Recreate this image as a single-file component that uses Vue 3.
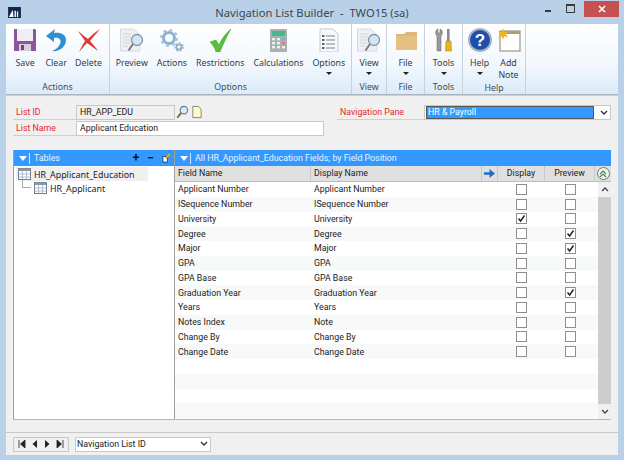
<template>
  <div class="window">
    <div class="titlebar">
      <svg class="logo" viewBox="0 0 14 12">
        <rect width="14" height="12" fill="#12294f" />
        <path d="M1 11 L5 3 L6 11 Z M7 4 H8.5 V11 H7 Z M9.6 5 H11 V11 H9.6 Z" fill="#fff" />
      </svg>
      <span class="title">Navigation List Builder &nbsp;-&nbsp; TWO15 (sa)</span>
      <div class="controls">
        <span class="min"></span>
        <span class="max"></span>
        <span class="close">
          <svg viewBox="0 0 8 8" width="8" height="8"><path d="M1 1 L7 7 M7 1 L1 7" stroke="#fff" stroke-width="1.6" /></svg>
        </span>
      </div>
    </div>

    <div class="ribbon">
      <div v-for="group in ribbon" :key="group.id" class="group" :class="group.id">
        <div class="group-items">
          <div v-for="btn in group.buttons" :key="btn.label" class="rbtn">
            <svg class="ricon" viewBox="0 0 24 24">
              <template v-if="btn.icon === 'save'">
                <path d="M1 1 H22 L23 2 V23 H1 Z" fill="#8c569f" />
                <rect x="4" y="1" width="16" height="12" fill="#f1edf4" />
                <rect x="6" y="16" width="12" height="7" fill="#d8cfdc" />
                <rect x="8" y="17" width="3" height="5" fill="#6d4380" />
              </template>
              <template v-else-if="btn.icon === 'undo'">
                <path d="M11 1 L2 8 L10 14 V10 C15 9 18 12 16 16 C14 20 11 22 8 23 C15 24 22 19 22 12 C22 6 16 4 10 5 Z" fill="#2f8fd3" />
              </template>
              <template v-else-if="btn.icon === 'x'">
                <path d="M2 3 C6 6 9 9 12 11 C15 8 19 4 24 1 C21 5 17 9 14 13 C17 16 20 20 22 23 C18 20 14 17 11 15 C8 18 6 21 3 24 C5 20 7 16 9 13 C7 10 4 6 2 3 Z" fill="#dd3a30" />
              </template>
              <template v-else-if="btn.icon === 'preview'">
                <path d="M0.5 1 H14 L20 7 V23 H0.5 Z" fill="#eef0f3" stroke="#c9ced5" stroke-width="0.7" />
                <path d="M3 6 H11 M3 9 H11 M3 12 H10 M3 15 H10 M3 18 H8" stroke="#cdd4db" stroke-width="1" />
                <circle cx="17" cy="12" r="5.5" fill="#cfe6f6" stroke="#86939d" stroke-width="1.3" />
                <path d="M13 16 L8.5 22.5" stroke="#77797c" stroke-width="2" />
              </template>
              <template v-else-if="btn.icon === 'gears'">
                <circle cx="9" cy="10" r="5.5" fill="none" stroke="#8db1d3" stroke-width="3" />
                <circle cx="9" cy="10" r="8" fill="none" stroke="#a4c2dd" stroke-width="2" stroke-dasharray="3 3.3" />
                <circle cx="19" cy="19" r="2.6" fill="none" stroke="#93a8ba" stroke-width="1.8" />
                <circle cx="19" cy="19" r="4.2" fill="none" stroke="#a9bac9" stroke-width="1.5" stroke-dasharray="2 1.8" />
              </template>
              <template v-else-if="btn.icon === 'check'">
                <path d="M2 14 L8 12 L11 17 C14 10 18 5 23 1 C19 8 15 16 12 24 H8 C7 20 5 17 2 14 Z" fill="#55c23c" stroke="#3a9a2a" stroke-width="0.5" />
              </template>
              <template v-else-if="btn.icon === 'calc'">
                <rect x="4" y="1" width="17" height="23" rx="1" fill="#a9b0ad" />
                <rect x="6" y="3" width="13" height="5" fill="#48b98a" />
                <g fill="#eef0ef">
                  <rect x="6" y="10" width="3" height="2.4" /><rect x="11" y="10" width="3" height="2.4" /><rect x="16" y="10" width="3" height="2.4" fill="#6fb3e0" />
                  <rect x="6" y="14" width="3" height="2.4" /><rect x="11" y="14" width="3" height="2.4" /><rect x="16" y="14" width="3" height="2.4" fill="#e77" />
                  <rect x="6" y="18" width="3" height="2.4" /><rect x="11" y="18" width="3" height="2.4" /><rect x="16" y="18" width="3" height="2.4" />
                </g>
              </template>
              <template v-else-if="btn.icon === 'list'">
                <path d="M3 1 H16 L21 6 V24 H3 Z" fill="#f7f8f9" stroke="#b9bec4" stroke-width="0.8" />
                <path d="M9 8 H18 M9 12 H18 M9 16 H18 M9 20 H18" stroke="#7c8087" stroke-width="1" />
                <path d="M5 8 H7.5 M5 12 H7.5 M5 16 H7.5 M5 20 H7.5" stroke="#27324a" stroke-width="1.6" />
              </template>
              <template v-else-if="btn.icon === 'folder'">
                <path d="M2 6 V22 H23 V4 H12 L10 6 Z" fill="#dfb878" />
                <path d="M2 8 H23 V22 H2 Z" fill="#e5bf84" />
              </template>
              <template v-else-if="btn.icon === 'tools'">
                <path d="M6 1 C3 2 3 6 5 8 V23 H9 V8 C11 6 11 2 8 1 V5 H6 Z" fill="#9a9a96" stroke="#666" stroke-width="0.5" />
                <rect x="15" y="1" width="2.6" height="12" fill="#8b8b88" />
                <path d="M14 13 H19 L19.5 23 H13.5 Z" fill="#e8b321" stroke="#a87e10" stroke-width="0.5" />
              </template>
              <template v-else-if="btn.icon === 'help'">
                <circle cx="12" cy="12" r="12" fill="#a9b3bd" />
                <circle cx="12" cy="12" r="10" fill="#1e4fae" />
                <text x="12" y="18" text-anchor="middle" class="qmark">?</text>
              </template>
              <template v-else-if="btn.icon === 'note'">
                <rect x="3" y="3" width="20" height="20" fill="#fff" stroke="#a8a49a" stroke-width="1.4" />
                <rect x="3" y="3" width="20" height="3" fill="#b09a7a" />
                <path d="M6 0 L7.2 4 L11 3 L8.6 6 L11 9.5 L7.2 8.3 L6 12 L4.8 8.3 L1 9.5 L3.4 6 L1 3 L4.8 4 Z" fill="#f6b21c" />
              </template>
            </svg>
            <span class="rlabel">{{ btn.label }}</span>
            <span v-if="btn.drop" class="drop"></span>
          </div>
        </div>
        <div class="group-name">{{ group.name }}</div>
      </div>
      <div class="ribbon-rest"></div>
    </div>

    <div class="content">
      <div class="form">
        <div class="form-left">
          <div class="form-row">
            <label class="req">List ID</label>
            <div class="input short">HR_APP_EDU</div>
            <svg class="mini" viewBox="0 0 14 14">
              <circle cx="8.5" cy="5" r="4" fill="#d7ecf7" stroke="#5f7d90" stroke-width="1.2" />
              <path d="M5.5 8 L1.5 13" stroke="#7a6a3a" stroke-width="2" />
            </svg>
            <svg class="mini" viewBox="0 0 14 14">
              <path d="M3 1 H9 L12 4 V13 H3 Z" fill="#fff8c8" stroke="#666" stroke-width="0.8" />
            </svg>
          </div>
          <div class="form-row">
            <label class="req">List Name</label>
            <div class="input long">Applicant Education</div>
          </div>
        </div>
        <div class="form-right">
          <label class="req pane-label">Navigation Pane</label>
          <div class="pane-select">
            <span class="pane-value">HR &amp; Payroll</span>
            <svg class="chev" viewBox="0 0 8 6" width="8" height="6"><path d="M1 1 L4 4 L7 1" fill="none" stroke="#333" stroke-width="1.4" /></svg>
          </div>
        </div>
      </div>

      <div class="panes">
        <div class="left-pane">
          <div class="pane-head">
            <svg class="head-chev" viewBox="0 0 8 5" width="8" height="5"><path d="M0 0 H8 L4 5 Z" fill="#fff" /></svg>
            <span class="head-sep"></span>
            <span>Tables</span>
            <span class="head-tools">
              <b>+</b><b>&minus;</b>
              <svg viewBox="0 0 10 11" width="9" height="10">
                <rect x="1" y="4" width="5" height="6" fill="#fff" stroke="#222" stroke-width="0.8" />
                <path d="M4 6 L9 1" stroke="#e9a91f" stroke-width="2" />
              </svg>
            </span>
          </div>
          <div class="tree">
            <div class="tree-row selected-node">
              <svg class="tbl" viewBox="0 0 13 12">
                <rect x="0.5" y="0.5" width="12" height="11" fill="#fff" stroke="#6d7d8e" />
                <rect x="0.5" y="0.5" width="12" height="2.5" fill="#8a99a8" />
                <path d="M0.5 6 H12.5 M0.5 9 H12.5 M4.5 3 V11.5 M8.5 3 V11.5" stroke="#9fb0c0" stroke-width="0.8" />
              </svg>
              <span class="node-name">HR_Applicant_Education</span>
            </div>
            <div class="tree-row child">
              <span class="branch"></span>
              <svg class="tbl" viewBox="0 0 13 12">
                <rect x="0.5" y="0.5" width="12" height="11" fill="#fff" stroke="#6d7d8e" />
                <rect x="0.5" y="0.5" width="12" height="2.5" fill="#8a99a8" />
                <path d="M0.5 6 H12.5 M0.5 9 H12.5 M4.5 3 V11.5 M8.5 3 V11.5" stroke="#9fb0c0" stroke-width="0.8" />
              </svg>
              <span class="node-name">HR_Applicant</span>
            </div>
          </div>
        </div>

        <div class="right-pane">
          <div class="pane-head">
            <svg class="head-chev" viewBox="0 0 8 5" width="8" height="5"><path d="M0 0 H8 L4 5 Z" fill="#fff" /></svg>
            <span class="head-sep"></span>
            <span>All HR_Applicant_Education Fields; by Field Position</span>
          </div>
          <div class="col-head">
            <div class="cell">Field Name</div>
            <div class="cell">Display Name</div>
            <div class="cell arrow-cell">
              <svg viewBox="0 0 11 9" width="11" height="9"><path d="M0 3.2 H5.5 V0 L11 4.5 L5.5 9 V5.8 H0 Z" fill="#1f6fc0" /></svg>
            </div>
            <div class="cell center">Display</div>
            <div class="cell center">Preview</div>
            <div class="cell collapse-cell">
              <span class="collapse">
                <svg viewBox="0 0 8 8" width="8" height="8"><path d="M1 4 L4 1 L7 4 M1 7 L4 4 L7 7" fill="none" stroke="#4d7f4d" stroke-width="1.1" /></svg>
              </span>
            </div>
          </div>
          <div class="grid-body">
            <div class="rows">
              <div v-for="(row, i) in rows" :key="i" class="row" :class="{ alt: i % 2 === 1 }">
                <span class="txt">{{ row.field }}</span>
                <span class="txt">{{ row.display }}</span>
                <span></span>
                <span class="box-cell"><span v-if="row.field" class="box"><svg v-if="row.d" viewBox="0 0 9 9" width="9" height="9"><path d="M1.5 4.5 L3.6 7 L7.5 1.5" fill="none" stroke="#222" stroke-width="1.5" /></svg></span></span>
                <span class="box-cell"><span v-if="row.field" class="box"><svg v-if="row.p" viewBox="0 0 9 9" width="9" height="9"><path d="M1.5 4.5 L3.6 7 L7.5 1.5" fill="none" stroke="#222" stroke-width="1.5" /></svg></span></span>
              </div>
            </div>
            <div class="scrollbar">
              <span class="sb-btn"><svg viewBox="0 0 8 5" width="8" height="5"><path d="M1 4 L4 1 L7 4" fill="none" stroke="#444" stroke-width="1.3" /></svg></span>
              <span class="sb-thumb"></span>
              <span class="sb-btn"><svg viewBox="0 0 8 5" width="8" height="5"><path d="M1 1 L4 4 L7 1" fill="none" stroke="#444" stroke-width="1.3" /></svg></span>
            </div>
          </div>
        </div>
      </div>

      <div class="footer">
        <div class="nav-btns">
          <svg viewBox="0 0 8 8" width="8" height="8"><path d="M1 0 V8 M7 0 V8 L2.5 4 Z" stroke="#222" fill="#222" stroke-width="0.8" /></svg>
          <svg viewBox="0 0 8 8" width="8" height="8"><path d="M6 0 V8 L1.5 4 Z" fill="#222" /></svg>
          <svg viewBox="0 0 8 8" width="8" height="8"><path d="M2 0 V8 L6.5 4 Z" fill="#222" /></svg>
          <svg viewBox="0 0 8 8" width="8" height="8"><path d="M7 0 V8 M1 0 V8 L5.5 4 Z" stroke="#222" fill="#222" stroke-width="0.8" /></svg>
        </div>
        <div class="foot-select">
          <span>Navigation List ID</span>
          <svg viewBox="0 0 8 6" width="8" height="6"><path d="M1 1 L4 4 L7 1" fill="none" stroke="#333" stroke-width="1.4" /></svg>
        </div>
      </div>
    </div>
  </div>
</template>

<script setup>
const ribbon = [
  { id: 'g-actions', name: 'Actions', buttons: [
    { label: 'Save', icon: 'save' },
    { label: 'Clear', icon: 'undo' },
    { label: 'Delete', icon: 'x' },
  ] },
  { id: 'g-options', name: 'Options', buttons: [
    { label: 'Preview', icon: 'preview' },
    { label: 'Actions', icon: 'gears' },
    { label: 'Restrictions', icon: 'check' },
    { label: 'Calculations', icon: 'calc' },
    { label: 'Options', icon: 'list', drop: true },
  ] },
  { id: 'g-view', name: 'View', buttons: [{ label: 'View', icon: 'preview', drop: true }] },
  { id: 'g-file', name: 'File', buttons: [{ label: 'File', icon: 'folder', drop: true }] },
  { id: 'g-tools', name: 'Tools', buttons: [{ label: 'Tools', icon: 'tools', drop: true }] },
  { id: 'g-help', name: 'Help', buttons: [
    { label: 'Help', icon: 'help', drop: true },
    { label: 'Add Note', icon: 'note' },
  ] },
]

const rows = [
  { field: 'Applicant Number', display: 'Applicant Number' },
  { field: 'ISequence Number', display: 'ISequence Number' },
  { field: 'University', display: 'University', d: true },
  { field: 'Degree', display: 'Degree', p: true },
  { field: 'Major', display: 'Major', p: true },
  { field: 'GPA', display: 'GPA' },
  { field: 'GPA Base', display: 'GPA Base' },
  { field: 'Graduation Year', display: 'Graduation Year', p: true },
  { field: 'Years', display: 'Years' },
  { field: 'Notes Index', display: 'Note' },
  { field: 'Change By', display: 'Change By' },
  { field: 'Change Date', display: 'Change Date' },
  { field: '', display: '' },
  { field: '', display: '' },
  { field: '', display: '' },
  { field: '', display: '' },
]
</script>

<style scoped>
.window {
  width: 624px;
  height: 460px;
  display: flex;
  flex-direction: column;
  background: #b9d1e8;
  font-family: Roboto, "Noto Sans", sans-serif;
  font-size: 8.8px;
  color: #222;
  padding: 0 6px 5px;
  box-sizing: border-box;
  overflow: hidden;
}

.titlebar {
  height: 24px;
  flex: none;
  position: relative;
  display: flex;
  align-items: center;
  justify-content: center;
}

.logo {
  position: absolute;
  left: 2px;
  top: 7px;
  width: 13px;
  height: 11px;
}

.title {
  font-family: "Noto Sans", sans-serif;
  font-size: 11.2px;
  color: #3c4650;
}

.controls {
  position: absolute;
  right: -1px;
  top: 0;
  display: flex;
  align-items: flex-start;
}

.min {
  width: 6px;
  height: 2px;
  background: #3a3a3a;
  margin: 10px 15px 0 0;
}

.max {
  width: 7px;
  height: 6px;
  border: 1px solid #3a3a3a;
  border-top-width: 2px;
  margin: 4px 9px 0 0;
}

.close {
  width: 35px;
  height: 16px;
  background: #c75050;
  display: flex;
  align-items: center;
  justify-content: center;
  margin-top: 1px;
}

.ribbon {
  height: 71px;
  flex: none;
  display: flex;
  background: linear-gradient(#ffffff, #f3f8fd 55%, #dcebf9);
  border-bottom: 1px solid #a9b6c2;
  box-sizing: border-box;
}

.group {
  display: flex;
  flex-direction: column;
  border-right: 1px solid #c5d3df;
  box-sizing: border-box;
}

.g-actions { width: 104px; }
.g-options { width: 242px; }
.g-view { width: 35px; }
.g-file { width: 38px; }
.g-tools { width: 38px; }
.g-help { width: 63px; }

.ribbon-rest {
  flex: 1;
}

.group-items {
  height: 57px;
  display: flex;
  justify-content: center;
  gap: 9px;
  padding-top: 4px;
  box-sizing: border-box;
}

.g-actions .group-items {
  gap: 7px;
}

.g-help .group-items {
  gap: 5px;
}

.rbtn {
  display: flex;
  flex-direction: column;
  align-items: center;
}

.g-help .rbtn:last-child {
  width: 24px;
  text-align: center;
}

.ricon {
  width: 24px;
  height: 24px;
  flex: none;
}

.qmark {
  font-family: "Liberation Sans", sans-serif;
  font-weight: 700;
  font-size: 17px;
  fill: #fff;
}

.rlabel {
  margin-top: 5px;
  font-family: "Noto Sans", sans-serif;
  font-size: 8.8px;
  line-height: 12px;
  color: #333b45;
}

.drop {
  margin-top: 3px;
  border-left: 3px solid transparent;
  border-right: 3px solid transparent;
  border-top: 3px solid #222;
}

.group-name {
  text-align: center;
  font-family: "Noto Sans", sans-serif;
  font-size: 8.8px;
  line-height: 14px;
  color: #3f4b57;
}

.content {
  flex: 1;
  min-height: 0;
  background: #f0f0f0;
  display: flex;
  flex-direction: column;
  padding: 0 6px 0 7px;
  border-top: 1px solid #c8d0d8;
}

.form {
  display: flex;
  justify-content: space-between;
  padding-top: 9px;
  height: 54px;
  box-sizing: border-box;
  flex: none;
}

.form-row {
  display: flex;
  height: 15px;
  margin-bottom: 1px;
  align-items: stretch;
}

.req {
  color: #e8262a;
  line-height: 15px;
  border-bottom: 1px solid #cfcfcf;
  box-sizing: border-box;
  padding-left: 3px;
}

.form-row .req {
  width: 63px;
}

.input {
  background: #f0f0f0;
  border: 1px solid #c8c8c8;
  box-sizing: border-box;
  line-height: 13px;
  padding-left: 3px;
}

.short {
  width: 99px;
}

.long {
  width: 248px;
  background: #fff;
}

.mini {
  width: 13px;
  height: 14px;
  margin-left: 1px;
}

.form-right {
  display: flex;
  height: 15px;
  margin-right: 1px;
}

.pane-label {
  width: 87px;
}

.pane-select {
  width: 187px;
  height: 15px;
  background: #fff;
  border: 1px solid #c8c8c8;
  box-sizing: border-box;
  display: flex;
  align-items: center;
  justify-content: space-between;
  padding-right: 2px;
}

.pane-value {
  flex: 1;
  height: 11px;
  line-height: 10px;
  margin: 0 6px 0 1px;
  background: #3399ff;
  border: 1px solid #555;
  color: #fff;
  padding-left: 1px;
}

.panes {
  height: 270px;
  flex: none;
  display: flex;
  border-left: 1px solid #a0a0a0;
  border-bottom: 1px solid #b5b5b5;
  box-sizing: border-box;
  width: 598px;
}

.left-pane {
  width: 161px;
  flex: none;
  background: #fff;
  border-right: 1px solid #a0a0a0;
  box-sizing: border-box;
}

.right-pane {
  flex: 1;
  display: flex;
  flex-direction: column;
  background: #fff;
  min-width: 0;
}

.pane-head {
  height: 16px;
  background: #3399ff;
  color: #e8f3ff;
  display: flex;
  align-items: center;
  gap: 2px;
  padding-left: 5px;
}

.head-sep {
  width: 1px;
  height: 11px;
  background: #cfe6ff;
  margin-right: 2px;
}

.head-tools {
  margin-left: auto;
  display: flex;
  align-items: center;
  gap: 8px;
  padding-right: 3px;
}

.head-tools b {
  color: #111;
  font-size: 12px;
  line-height: 12px;
  font-weight: 700;
}

.tree {
  padding: 0 2px;
}

.tree-row {
  height: 14px;
  display: flex;
  align-items: center;
  gap: 3px;
  font-family: "Noto Sans", sans-serif;
  font-size: 8.9px;
}

.selected-node {
  background: #f0f0f0;
  width: 132px;
  padding-left: 2px;
  margin-top: 1px;
  box-sizing: border-box;
}

.child {
  padding-left: 6px;
}

.branch {
  width: 9px;
  height: 8px;
  margin-top: -8px;
  border-left: 1px solid #aaa;
  border-bottom: 1px solid #aaa;
  margin-right: -3px;
  box-sizing: border-box;
}

.tbl {
  width: 13px;
  height: 12px;
  flex: none;
}

.child .tbl {
  margin-left: 3px;
}

.col-head {
  height: 16px;
  display: grid;
  grid-template-columns: 136px 171px 16px 47px 50px 16px;
  background: #e0e0e0;
  flex: none;
}

.cell {
  border-right: 1px solid #c8c8c8;
  border-bottom: 1px solid #bdbdbd;
  padding-left: 3px;
  line-height: 15px;
  box-sizing: border-box;
}

.center {
  text-align: center;
  padding-left: 0;
}

.arrow-cell,
.collapse-cell {
  padding: 0;
  display: flex;
  align-items: center;
  justify-content: center;
}

.collapse-cell {
  border-right: none;
}

.collapse {
  width: 13px;
  height: 13px;
  border: 1px solid #6b7a6b;
  border-radius: 50%;
  box-sizing: border-box;
  background: #eef4ee;
  display: flex;
  align-items: center;
  justify-content: center;
}

.grid-body {
  flex: 1;
  min-height: 0;
  display: flex;
  overflow: hidden;
}

.rows {
  flex: 1;
  min-width: 0;
}

.row {
  height: 14.75px;
  display: grid;
  grid-template-columns: 136px 171px 16px 47px 50px;
  align-items: center;
}

.alt {
  background: #f7f9f9;
}

.txt {
  padding-left: 3px;
}

.box-cell {
  display: flex;
  justify-content: center;
  align-items: center;
}

.box {
  width: 11px;
  height: 11px;
  background: #fff;
  border: 1px solid #8e8e8e;
  box-sizing: border-box;
  display: flex;
  align-items: center;
  justify-content: center;
}

.scrollbar {
  width: 13px;
  flex: none;
  display: flex;
  flex-direction: column;
  background: #f0f0f0;
}

.sb-btn {
  height: 15px;
  flex: none;
  display: flex;
  align-items: center;
  justify-content: center;
}

.sb-thumb {
  flex: 1;
  background: #cdcdcd;
}

.footer {
  flex: 1;
  display: flex;
  align-items: center;
  gap: 6px;
  border-top: 1px solid #c9c9c9;
  margin: 12px -6px 0 -7px;
  padding-left: 7px;
}

.nav-btns {
  width: 56px;
  height: 15px;
  border: 1px solid #c8c8c8;
  box-sizing: border-box;
  display: flex;
  align-items: center;
  justify-content: space-around;
  padding: 0 2px;
}

.foot-select {
  width: 136px;
  height: 15px;
  background: #fff;
  border: 1px solid #c8c8c8;
  box-sizing: border-box;
  display: flex;
  align-items: center;
  justify-content: space-between;
  padding: 0 2px 0 1px;
}
</style>

<style>
html,
body {
  margin: 0;
  background: #b9d1e8;
}
</style>
